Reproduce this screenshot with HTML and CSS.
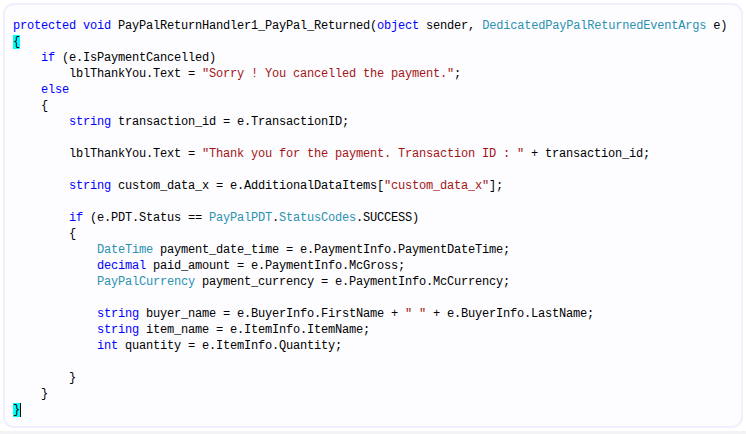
FILE: index.html
```html
<!DOCTYPE html>
<html>
<head>
<meta charset="utf-8">
<link rel="stylesheet" href="styles.css">
</head>
<body>
<div class="frame">
<div class="code">
<div class="ln"><span class="kw">protected</span> <span class="kw">void</span> PayPalReturnHandler1_PayPal_Returned(<span class="kw">object</span> sender, <span class="ty">DedicatedPayPalReturnedEventArgs</span> e)</div>
<div class="ln"><span class="hl">{</span></div>
<div class="ln i1"><span class="kw">if</span> (e.IsPaymentCancelled)</div>
<div class="ln i2">lblThankYou.Text = <span class="st">"Sorry ! You cancelled the payment."</span>;</div>
<div class="ln i1"><span class="kw">else</span></div>
<div class="ln i1">{</div>
<div class="ln i2"><span class="kw">string</span> transaction_id = e.TransactionID;</div>
<div class="ln"></div>
<div class="ln i2">lblThankYou.Text = <span class="st">"Thank you for the payment. Transaction ID : "</span> + transaction_id;</div>
<div class="ln"></div>
<div class="ln i2"><span class="kw">string</span> custom_data_x = e.AdditionalDataItems[<span class="st">"custom_data_x"</span>];</div>
<div class="ln"></div>
<div class="ln i2"><span class="kw">if</span> (e.PDT.Status == <span class="ty">PayPalPDT</span>.<span class="ty">StatusCodes</span>.SUCCESS)</div>
<div class="ln i2">{</div>
<div class="ln i3"><span class="ty">DateTime</span> payment_date_time = e.PaymentInfo.PaymentDateTime;</div>
<div class="ln i3"><span class="kw">decimal</span> paid_amount = e.PaymentInfo.McGross;</div>
<div class="ln i3"><span class="ty">PayPalCurrency</span> payment_currency = e.PaymentInfo.McCurrency;</div>
<div class="ln"></div>
<div class="ln i3"><span class="kw">string</span> buyer_name = e.BuyerInfo.FirstName + <span class="st">" "</span> + e.BuyerInfo.LastName;</div>
<div class="ln i3"><span class="kw">string</span> item_name = e.ItemInfo.ItemName;</div>
<div class="ln i3"><span class="kw">int</span> quantity = e.ItemInfo.Quantity;</div>
<div class="ln"></div>
<div class="ln i2">}</div>
<div class="ln i1">}</div>
<div class="ln"><span class="hl caret">}</span></div>
</div>
</div>
<div class="rule"></div>
</body>
</html>
```
FILE: styles.css
```css
html, body {
  margin: 0;
  padding: 0;
  background: #ffffff;
}
.frame {
  margin: 3px 3px 0 3px;
  border: 2px solid #efeffd;
  border-radius: 11px;
  background: #fdfdff;
  padding: 13px 8px 0 8px;
  box-sizing: border-box;
  height: 425px;
}
.code {
  font-family: "Liberation Mono", "DejaVu Sans Mono", monospace;
  font-size: 12px;
  letter-spacing: -0.2px;
  line-height: 16px;
  color: #000000;
}
.ln {
  height: 16px;
  white-space: pre;
}
.i1 { padding-left: 28px; }
.i2 { padding-left: 56px; }
.i3 { padding-left: 84px; }
.kw { color: #0000ff; }
.ty { color: #2b91af; }
.st { color: #a31515; }
.hl { background: #00ffff; }
.caret { border-right: 1px solid #000; }
.rule {
  margin-top: 3px;
  height: 3px;
  background: #f3f3f5;
}
```
